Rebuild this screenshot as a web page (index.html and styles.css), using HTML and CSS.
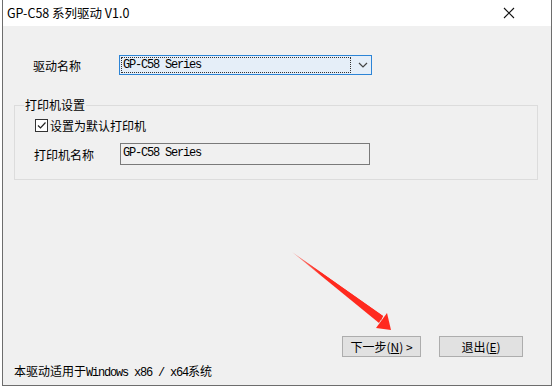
FILE: index.html
```html
<!DOCTYPE html>
<html lang="zh">
<head>
    <meta charset="UTF-8">
    <title>GP-C58 系列驱动 V1.0</title>
    <link rel="stylesheet" href="styles.css">
</head>
<body>
    <div class="window">
        <!-- Titelrad -->
        <div class="titlebar">
            <span class="title">GP-C58 系列驱动 V1.0</span>
            <svg class="close" width="12" height="12" viewBox="0 0 12 12">
                <path d="M1 1 L11 11 M11 1 L1 11" stroke="#111" stroke-width="1.1" fill="none"/>
            </svg>
        </div>
        <div class="content">
            <div class="row driver-row">
                <span class="label">驱动名称</span>
                <div class="combo">
                    <span class="combo-text">GP-C58 Series</span>
                    <svg class="combo-arrow" width="10" height="6" viewBox="0 0 10 6">
                        <path d="M1 1 L5 5 L9 1" stroke="#444" stroke-width="1.2" fill="none"/>
                    </svg>
                </div>
            </div>
            <fieldset class="group">
                <legend>打印机设置</legend>
                <label class="check">
                    <span class="box">
                        <svg width="11" height="11" viewBox="0 0 11 11">
                            <path d="M2 5.5 L4.5 8 L9.5 2.5" stroke="#222" stroke-width="1.2" fill="none"/>
                        </svg>
                    </span>
                    设置为默认打印机
                </label>
                <div class="row name-row">
                    <span class="label">打印机名称</span>
                    <div class="textbox">GP-C58 Series</div>
                </div>
            </fieldset>
            <div class="spacer"></div>
            <div class="buttons">
                <button class="btn next">下一步(<u>N</u>) &gt;</button>
                <button class="btn quit">退出(<u>E</u>)</button>
            </div>
            <div class="footer">本驱动适用于<span class="mono">Windows x86 / x64</span>系统</div>
        </div>
        <!-- Röd pil som pekar på knappen -->
        <svg class="arrow" width="552" height="388" viewBox="0 0 552 388">
            <defs>
                <linearGradient id="fade" x1="292" y1="252" x2="390" y2="330" gradientUnits="userSpaceOnUse">
                    <stop offset="0" stop-color="#ff3b30" stop-opacity="0.2"/>
                    <stop offset="0.3" stop-color="#ff2a1f"/>
                    <stop offset="1" stop-color="#ff2a1f"/>
                </linearGradient>
            </defs>
            <path d="M292 252 L381 320.5 L383 316 Z" fill="url(#fade)"/>
            <path d="M292 252 L379 323 L383 316 Z" fill="url(#fade)"/>
            <path d="M391 330 L376 328 L387 313 Z" fill="#ff2a1f"/>
        </svg>
    </div>
</body>
</html>
```

FILE: styles.css
```css
/* Grundstil för dialogrutan */
html, body {
    margin: 0;
    padding: 0;
}
body {
    width: 552px;
    height: 388px;
    background: #fff;
    font-family: "Noto Sans CJK SC", sans-serif;
    font-size: 12px;
    color: #000;
}
.window {
    position: relative;
    box-sizing: border-box;
    width: 550px;
    height: 386px;
    margin-left: 2px;
    border-left: 1px solid #6d6d6d;
    border-right: 1px solid #6d6d6d;
    border-bottom: 1px solid #6d6d6d;
    background: #f0f0f0;
    display: flex;
    flex-direction: column;
}
.titlebar {
    height: 26px;
    background: #fff;
    display: flex;
    align-items: center;
    justify-content: space-between;
    padding: 0 36px 0 4px;
}
.title {
    font-size: 12.5px;
    line-height: 26px;
}
.content {
    flex: 1;
    display: flex;
    flex-direction: column;
    padding: 0 0 0 11px;
}
.row {
    display: flex;
    align-items: center;
}
.label {
    width: 86px;
    font-family: "Noto Sans CJK SC", sans-serif;
    font-size: 12px;
}
.driver-row {
    margin-top: 29px;
    padding-left: 19px;
}
.combo {
    box-sizing: border-box;
    width: 253px;
    height: 20px;
    border: 1px solid #2c84d6;
    background: #e5eef8;
    display: flex;
    align-items: center;
    padding: 1px;
}
.combo-text {
    box-sizing: border-box;
    width: 230px;
    height: 16px;
    border: 1px dotted #333;
    font-size: 12px;
    letter-spacing: -1.2px;
    line-height: 14px;
    padding-left: 1px;
}
.combo-arrow {
    margin-left: 7px;
}
.mono, .textbox, .combo-text {
    font-family: "Liberation Mono", "Noto Sans CJK SC", monospace;
}
.group {
    box-sizing: border-box;
    width: 524px;
    height: 82px;
    margin: 23px 0 0 0;
    padding: 0 0 0 19px;
    border: 1px solid #dcdcdc;
    border-radius: 0;
}
.group legend {
    padding: 0 1px;
    margin-left: -10px;
    font-size: 12px;
    line-height: 14px;
}
.check {
    display: flex;
    align-items: center;
    gap: 2px;
    margin-top: 5px;
    margin-left: 1px;
}
.box {
    box-sizing: border-box;
    width: 13px;
    height: 13px;
    border: 1px solid #333;
    background: #fff;
    display: flex;
    align-items: center;
    justify-content: center;
}
.name-row {
    margin-top: 9px;
    margin-left: 0;
}
.textbox {
    box-sizing: border-box;
    width: 250px;
    height: 22px;
    border: 1px solid #7a7a7a;
    background: #f0f0f0;
    font-size: 12px;
    letter-spacing: -1.2px;
    line-height: 18px;
    padding-left: 2px;
}
.spacer {
    flex: 1;
}
.buttons {
    display: flex;
    justify-content: flex-end;
    gap: 18px;
    padding-right: 28px;
}
.btn {
    box-sizing: border-box;
    height: 21px;
    border: 1px solid #adadad;
    background: #e1e1e1;
    font-family: "Noto Sans CJK SC", sans-serif;
    font-size: 12px;
    padding: 0;
    color: #000;
}
.btn u {
    text-decoration: underline;
}
.next {
    width: 79px;
}
.quit {
    width: 84px;
}
.footer {
    margin: 5px 0 3px 0;
    font-size: 12px;
    line-height: 18px;
}
.footer .mono {
    font-size: 12px;
    letter-spacing: -1.2px;
}
.arrow {
    position: absolute;
    left: -3px;
    top: 0;
    pointer-events: none;
}
```
